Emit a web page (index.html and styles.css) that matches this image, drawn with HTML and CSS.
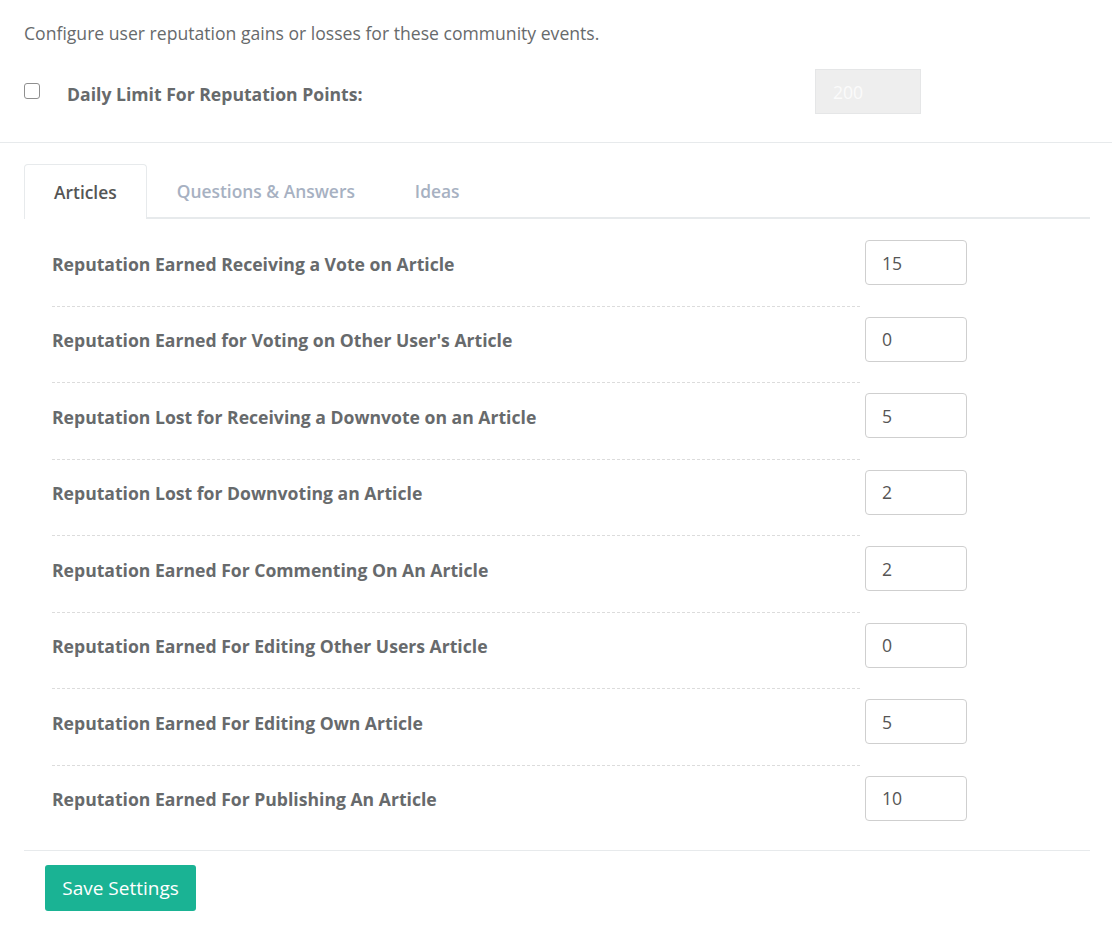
FILE: index.html
```html
<!DOCTYPE html>
<html>
<head>
<meta charset="utf-8">
<link rel="stylesheet" href="styles.css">
</head>
<body>
<div class="top">
  <p class="intro">Configure user reputation gains or losses for these community events.</p>
  <div class="limit">
    <input type="checkbox" class="check">
    <label class="limit-label">Daily Limit For Reputation Points:</label>
    <input type="text" class="limit-input" value="200" disabled>
  </div>
</div>
<div class="panel">
  <div class="tabs">
    <div class="tab active">Articles</div>
    <div class="tab">Questions &amp; Answers</div>
    <div class="tab">Ideas</div>
  </div>
  <div class="rows">
    <div class="row"><label class="row-label">Reputation Earned Receiving a Vote on Article</label><input class="num" type="text" value="15"></div>
    <div class="sep"></div>
    <div class="row"><label class="row-label">Reputation Earned for Voting on Other User's Article</label><input class="num" type="text" value="0"></div>
    <div class="sep"></div>
    <div class="row"><label class="row-label">Reputation Lost for Receiving a Downvote on an Article</label><input class="num" type="text" value="5"></div>
    <div class="sep"></div>
    <div class="row"><label class="row-label">Reputation Lost for Downvoting an Article</label><input class="num" type="text" value="2"></div>
    <div class="sep"></div>
    <div class="row"><label class="row-label">Reputation Earned For Commenting On An Article</label><input class="num" type="text" value="2"></div>
    <div class="sep"></div>
    <div class="row"><label class="row-label">Reputation Earned For Editing Other Users Article</label><input class="num" type="text" value="0"></div>
    <div class="sep"></div>
    <div class="row"><label class="row-label">Reputation Earned For Editing Own Article</label><input class="num" type="text" value="5"></div>
    <div class="sep"></div>
    <div class="row"><label class="row-label">Reputation Earned For Publishing An Article</label><input class="num" type="text" value="10"></div>
  </div>
  <div class="footer">
    <button class="save">Save Settings</button>
  </div>
</div>
</body>
</html>
```
FILE: styles.css
```css
html, body {
  margin: 0;
  padding: 0;
  background: #fff;
}
body {
  font-family: "Open Sans", "Liberation Sans", sans-serif;
  color: #676a6c;
  width: 1112px;
}
.top {
  padding: 18px 24px 28px;
  border-bottom: 1px solid #e7eaec;
}
.intro {
  margin: 0;
  font-size: 17.6px;
  line-height: 30px;
  color: #676a6c;
}
.limit {
  display: flex;
  align-items: center;
  margin-top: 21px;
  height: 45px;
}
.check {
  appearance: none;
  -webkit-appearance: none;
  margin: -2px 27px 0 0;
  width: 16px;
  height: 16px;
  border: 1px solid #8f8f8f;
  border-radius: 3px;
  background: #fff;
  box-sizing: border-box;
}
.limit-label {
  width: 748px;
  font-size: 17.6px;
  font-weight: 700;
  color: #676a6c;
  padding-top: 4px;
}
.limit-input {
  width: 106px;
  height: 45px;
  box-sizing: border-box;
  border: 1px solid #e5e6e7;
  background: #eeeeee;
  color: #fbfbfb;
  font-family: inherit;
  font-size: 17.6px;
  padding: 0 0 0 17px;
  border-radius: 0;
}
.panel {
  padding: 21px 22px 0 24px;
}
.tabs {
  display: flex;
  border-bottom: 2px solid #e7eaec;
  height: 55px;
  box-sizing: border-box;
}
.tab {
  padding: 0 30px;
  height: 53px;
  line-height: 54px;
  font-size: 17.4px;
  font-weight: 600;
  color: #a7b1c2;
  box-sizing: border-box;
}
.tab.active {
  padding: 0 29px;
  color: #555;
  background: #fff;
  border: 1px solid #e7eaec;
  border-bottom: none;
  border-radius: 4px 4px 0 0;
  height: 55px;
  margin-bottom: -2px;
}
.rows {
  padding: 11px 0 9px;
  border-bottom: 1px solid #e7eaec;
}
.row {
  display: flex;
  align-items: center;
  padding: 10px 0 20.5px 28px;
}
.sep {
  margin-left: 28px;
  width: 808px;
  border-top: 1px dashed #dcdcdc;
}
.row-label {
  width: 813px;
  font-size: 17.6px;
  font-weight: 700;
  color: #676a6c;
  padding-top: 2px;
}
.num {
  width: 102px;
  height: 45px;
  box-sizing: border-box;
  border: 1px solid #cfcfcf;
  border-radius: 4px;
  font-family: inherit;
  font-size: 17.6px;
  color: #555;
  padding: 0 0 0 16px;
  background: #fff;
}
.footer {
  padding: 14px 0 0 21px;
}
.save {
  width: 151px;
  height: 46px;
  border: none;
  border-radius: 3px;
  background: #1ab394;
  color: #fff;
  font-family: inherit;
  font-size: 19px;
  padding: 0;
}
```
